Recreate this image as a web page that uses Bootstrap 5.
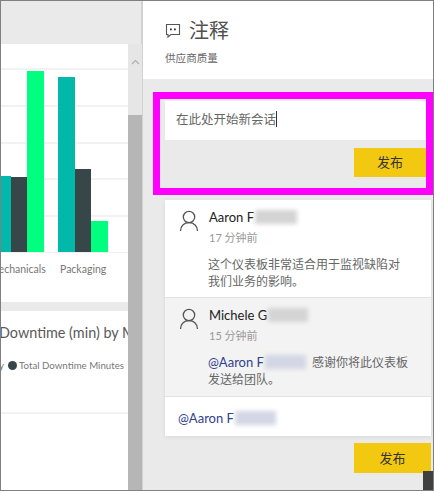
<!DOCTYPE html>
<html lang="zh-CN">
<head>
  <meta charset="UTF-8" />
  <title>注释</title>
  <link href="https://cdn.jsdelivr.net/npm/bootstrap@5.3.3/dist/css/bootstrap.min.css" rel="stylesheet" />
  <style>
    html, body { height: 100%; overflow: hidden; }
    body {
      font-family: "Lato", "Noto Sans CJK SC", sans-serif;
      background-color: #eaeaea;
      color: #555;
    }

    .frame-box { width: 434px; height: 491px; border: 1px solid #808080; overflow: hidden; }

    /* Left side: dashboard behind the pane */
    .dash-side { width: 142px; flex: none; padding-top: 43px; border-right: 2px solid #d2d2d2; }
    .dash-col { width: 127px; flex: none; }
    .tile-chart { height: 258px; background: #fff; overflow: hidden; }
    .plot-area {
      height: 209px;
      background-image: repeating-linear-gradient(to bottom, transparent 0, transparent 24px, #f2f2f2 24px, #f2f2f2 26px, transparent 26px, transparent 36.8px);
      border-bottom: 1px solid #f0f0f0;
    }
    .chart-bar { flex: none; }
    .bar-teal { background: #01b8aa; }
    .bar-dark { background: #374649; }
    .bar-green { background: #00ff7f; }
    .axis-labels { font-size: 10.5px; color: #777; margin-top: 9px; white-space: nowrap; margin-left: -12px; }
    .axis-labels span:first-child { width: 71px; flex: none; }
    .tile-gap { height: 9px; }
    .tile-second { height: 180px; background: #fff; overflow: hidden; }
    .tile-title { font-size: 14.4px; color: #5a5a5a; white-space: nowrap; margin-left: -2px; padding-top: 11px; line-height: 22px; }
    .tile-legend { font-size: 9.7px; color: #777; white-space: nowrap; margin-top: 14px; line-height: 14px; margin-left: -2px; }
    .legend-dot { width: 9px; height: 9px; border-radius: 50%; background: #374649; flex: none; }
    .legend-label { margin-left: -2px; }
    .tile-rule { border-top: 2px solid #f2f2f2; margin-top: 40px; }
    .fake-scroll { width: 14px; flex: none; background: #e6e6e6; }
    .scroll-up { height: 71px; text-align: center; padding-top: 4px; }
    .scroll-thumb { background: #b6b6b6; height: 400px; }

    /* Comment pane */
    .pane-side { flex: 1 1 auto; min-width: 0; position: relative; }
    .pane-head { height: 78px; background: #fff; padding: 15px 0 0 22px; }
    .pane-title { font-size: 20px; line-height: 28px; color: #505050; }
    .pane-sub { font-size: 10.6px; color: #666; line-height: 14px; margin-top: 7px; }
    .bubble-icon { margin-left: -1px; }

    .hl-box { border: 7px solid #ff00ff; margin: 13px 0 0 10px; height: 103px; padding-top: 2px; }
    .new-input { margin-left: 5px; height: 39px; background: #fff; font-size: 12.5px; line-height: 38px; padding-left: 11px; color: #666; }
    .new-caret { display: inline-block; width: 1px; height: 16px; background: #333; vertical-align: -3px; }
    .post-btn {
      width: 72px; height: 29px; padding: 0; border: 0; border-radius: 0;
      background: #f2c811; color: #333; font-size: 13px; line-height: 29px;
    }
    .post-btn-low { width: 77px; height: 30px; }
    .low-row { margin: 7px 2px 0 0; }

    .comment-stack { margin: 5px 2px 0 22px; box-shadow: 0 1px 4px rgba(0,0,0,.08); background: #fff; }
    .comment-item { padding: 9px 10px 0 14px; border-bottom: 1px solid #e2e2e2; }
    .item-one { height: 98px; }
    .item-two { height: 99px; background: #f3f3f3; padding-top: 9px; }
    .comment-body { min-width: 0; margin-left: 10px; }
    .comment-name { font-size: 13px; color: #222; line-height: 17px; }
    .comment-time { font-size: 11px; color: #999; line-height: 15px; margin-top: 4px; }
    .comment-text { font-size: 12px; line-height: 17px; color: #666; margin: 11px 0 0 -1px; white-space: nowrap; }
    .person-icon { flex: none; margin-top: 1px; }
    .blur-name { display: inline-block; height: 14px; vertical-align: -2px; margin-left: 1px; filter: blur(2px); }
    .blur-gray { background: #d4d4d4; }
    .blur-blue { background: #d3d6e4; }
    .at-name { color: #2f3f8f; font-size: 13px; }
    .draft-row { height: 39px; font-size: 13px; line-height: 43px; padding-left: 13px; }
    .corner-grip { position: absolute; right: 0; bottom: 0; width: 10px; height: 19px; background: #404040; }
  </style>
  <script src="https://cdn.jsdelivr.net/npm/bootstrap@5.3.3/dist/js/bootstrap.bundle.min.js"></script>
</head>
<body>
  <div class="frame-box d-flex">
    <div class="dash-side d-flex">
      <div class="dash-col">
        <div class="tile-chart">
          <div class="plot-area d-flex align-items-end" id="plot"></div>
          <div class="axis-labels d-flex"><span>Mechanicals</span><span>Packaging</span></div>
        </div>
        <div class="tile-gap"></div>
        <div class="tile-second">
          <div class="tile-title">Downtime (min) by M</div>
          <div class="tile-legend d-flex align-items-center gap-1">
            <span>y</span><span class="legend-dot"></span><span class="legend-label">Total Downtime Minutes</span>
          </div>
          <div class="tile-rule"></div>
        </div>
      </div>
      <div class="fake-scroll">
        <div class="scroll-up">
          <svg width="9" height="6" viewBox="0 0 9 6"><path d="M1 5l3.5-3.500L8 5" fill="none" stroke="#b0b0b0" stroke-width="1.200"/></svg>
        </div>
        <div class="scroll-thumb"></div>
      </div>
    </div>

    <div class="pane-side">
      <div class="pane-head">
        <div class="d-flex align-items-center">
          <svg class="bubble-icon me-2" width="17" height="16" viewBox="0 0 17 16">
            <path d="M2.500 2.500h13v10H7l-3 2.500v-2.500H2.500z" fill="none" stroke="#555" stroke-width="1.100"/>
            <rect x="6" y="6.500" width="1.800" height="1.800" fill="#333"/><rect x="10" y="6.500" width="1.800" height="1.800" fill="#333"/>
          </svg>
          <span class="pane-title">注释</span>
        </div>
        <div class="pane-sub">供应商质量</div>
      </div>

      <div class="hl-box">
        <div class="new-input">在此处开始新会话<span class="new-caret"></span></div>
        <div class="d-flex justify-content-end mt-2">
          <button type="button" class="btn post-btn">发布</button>
        </div>
      </div>

      <div class="comment-stack">
        <div class="comment-item item-one d-flex">
          <svg class="person-icon" width="20" height="22" viewBox="0 0 20 22">
            <circle cx="10" cy="7" r="5.700" fill="none" stroke="#555" stroke-width="1.300"/>
            <path d="M1.500 21c0-5 3.500-8.300 8.500-8.300s8.500 3.300 8.500 8.300" fill="none" stroke="#555" stroke-width="1.300"/>
          </svg>
          <div class="comment-body">
            <div class="comment-name">Aaron F<span class="blur-name blur-gray" style="width:42px"></span></div>
            <div class="comment-time">17 分钟前</div>
            <div class="comment-text">这个仪表板非常适合用于监视缺陷对<br>我们业务的影响。</div>
          </div>
        </div>
        <div class="comment-item item-two d-flex">
          <svg class="person-icon" width="20" height="22" viewBox="0 0 20 22">
            <circle cx="10" cy="7" r="5.700" fill="none" stroke="#555" stroke-width="1.300"/>
            <path d="M1.500 21c0-5 3.500-8.300 8.500-8.300s8.500 3.300 8.500 8.300" fill="none" stroke="#555" stroke-width="1.300"/>
          </svg>
          <div class="comment-body">
            <div class="comment-name">Michele G<span class="blur-name blur-gray" style="width:40px"></span></div>
            <div class="comment-time">15 分钟前</div>
            <div class="comment-text"><span class="at-name">@Aaron F</span><span class="blur-name blur-blue" style="width:41px"></span>&nbsp; 感谢你将此仪表板<br>发送给团队。</div>
          </div>
        </div>
        <div class="draft-row at-name">@Aaron F<span class="blur-name blur-blue" style="width:41px"></span></div>
      </div>

      <div class="low-row d-flex justify-content-end">
        <button type="button" class="btn post-btn post-btn-low">发布</button>
      </div>
      <div class="corner-grip"></div>
    </div>
  </div>

  <script>
    // heights measured from the chart baseline
    const barras = [
      { w: 10, h: 76, c: "bar-teal" },
      { w: 16, h: 75, c: "bar-dark" },
      { w: 17, h: 181, c: "bar-green" },
      { w: 14, h: 0, c: "" },
      { w: 17, h: 175, c: "bar-teal" },
      { w: 16, h: 83, c: "bar-dark" },
      { w: 17, h: 31, c: "bar-green" }
    ];
    const plot = document.getElementById("plot");
    barras.forEach(b => {
      const d = document.createElement("div");
      d.className = "chart-bar " + b.c;
      d.style.width = b.w + "px";
      d.style.height = b.h + "px";
      plot.appendChild(d);
    });
  </script>
</body>
</html>
